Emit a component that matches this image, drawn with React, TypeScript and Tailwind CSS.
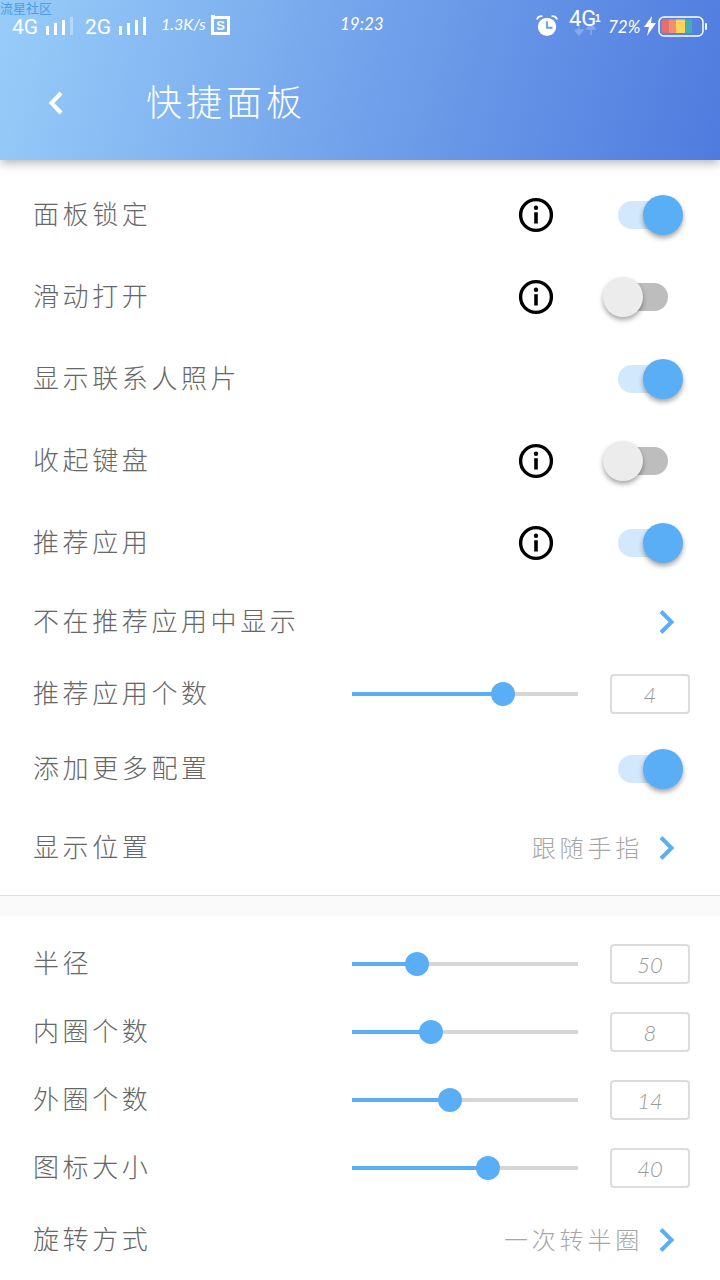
import React from "react";

const cjk = "font-['Noto_Sans_CJK_SC',sans-serif]";

function Info() {
  return (
    <svg width="36" height="36" viewBox="0 0 36 36" className="shrink-0">
      <circle cx="18" cy="18" r="15.4" fill="none" stroke="#000" strokeWidth="3.4" />
      <circle cx="18" cy="10.8" r="2.2" fill="#000" />
      <rect x="16.2" y="15.2" width="3.6" height="11.3" fill="#000" />
    </svg>
  );
}

function Chevron() {
  return (
    <svg width="18" height="26" viewBox="0 0 18 26" className="shrink-0">
      <path d="M3 2.5 L13.5 13 L3 23.5" fill="none" stroke="#5aaef5" strokeWidth="4" />
    </svg>
  );
}

function Switch({ on }: { on: boolean }) {
  return (
    <div className={on ? "relative h-[28px] w-[50px] rounded-full bg-[#d2e8fc]" : "relative h-[28px] w-[50px] rounded-full bg-[#bdbdbd]"}>
      <div
        className={
          on
            ? "absolute left-[25px] top-[-6px] h-[40px] w-[40px] rounded-full bg-[#5aaef5] shadow-[0_3px_5px_rgba(0,0,0,0.35)]"
            : "absolute left-[-15px] top-[-6px] h-[40px] w-[40px] rounded-full bg-[#ececec] shadow-[0_3px_5px_rgba(0,0,0,0.35)]"
        }
      />
    </div>
  );
}

function Label({ children }: { children: string }) {
  return <span className={`${cjk} mb-[4px] text-[26px] leading-none font-light tracking-[3.6px] text-[#666]`}>{children}</span>;
}

function SwitchRow({ label, info, on, h = "h-[82px]" }: { label: string; info?: boolean; on: boolean; h?: string }) {
  return (
    <div className={`flex items-center pl-[33px] ${h}`}>
      <Label>{label}</Label>
      <div className="ml-auto flex items-center">
        {info && <Info />}
        <div className="ml-[64px] mr-[52px] w-[50px] first:ml-0">
          <Switch on={on} />
        </div>
      </div>
    </div>
  );
}

function SliderRow({ label, value, pos }: { label: string; value: string; pos: number }) {
  return (
    <div className="flex h-[68px] items-center pl-[33px] pr-[30px]">
      <Label>{label}</Label>
      <div className="ml-auto mr-[32px] relative h-[4px] w-[226px] bg-[#d6d6d6]">
        <div className="h-full bg-[#5aaef5]" style={{ width: pos }} />
        <div className="absolute top-[-10px] h-[24px] w-[24px] rounded-full bg-[#5aaef5]" style={{ left: pos - 12 }} />
      </div>
      <div className="flex h-[40px] w-[80px] items-center justify-center rounded-[4px] border-2 border-[#dcdcdc] font-['Lato',sans-serif] text-[22px] font-light italic text-[#999]">
        {value}
      </div>
    </div>
  );
}

function LinkRow({ label, value }: { label: string; value?: string }) {
  return (
    <div className="flex h-[76px] items-center pl-[33px] pr-[44px]">
      <Label>{label}</Label>
      <div className="ml-auto flex items-center gap-[15px]">
        {value && <span className={`${cjk} mb-[3px] text-[24px] leading-none font-light tracking-[3.8px] text-[#a6a6a6]`}>{value}</span>}
        <Chevron />
      </div>
    </div>
  );
}

function Bars({ dim }: { dim?: boolean }) {
  return (
    <svg width="28" height="18" viewBox="0 0 28 18" className="shrink-0">
      <rect x="0" y="9" width="3" height="9" fill="#fff" />
      <rect x="8" y="6" width="3" height="12" fill="#fff" />
      <rect x="16" y="3" width="3" height="15" fill="#fff" />
      <rect x="24" y="0" width="3" height="18" fill="#fff" opacity={dim ? 0.35 : 1} />
    </svg>
  );
}

function StatusBar() {
  return (
    <div className="flex h-[52px] items-center font-['Liberation_Sans',sans-serif] text-white">
      <span className="ml-[12px] mt-[2px] w-[34px] text-[21px] leading-none font-['Roboto',sans-serif]">4G</span>
      <Bars dim />
      <span className="ml-[11px] mt-[2px] w-[34px] text-[21px] leading-none font-['Roboto',sans-serif]">2G</span>
      <Bars />
      <span className="ml-[14px] mb-[4px] w-[50px] text-[16px] italic leading-none font-['Lato',sans-serif]">1.3K/s</span>
      <svg width="20" height="20" viewBox="0 0 20 20" className="shrink-0 mb-[3px]">
        <rect x="1.5" y="2.5" width="16" height="16" fill="none" stroke="#fff" strokeWidth="3" />
        <rect x="0" y="0" width="4" height="3" fill="#fff" />
        <text x="9.5" y="15" fontSize="13" fontWeight="700" textAnchor="middle" fill="#fff" fontFamily="Liberation Sans">S</text>
      </svg>
      <span className="ml-[109px] mb-[5px] w-[44px] whitespace-nowrap text-[17px] italic leading-none font-['Lato',sans-serif]">19:23</span>
      <svg width="22" height="22" viewBox="0 0 24 24" className="ml-[152px] mb-[2px] shrink-0">
        <circle cx="12" cy="14" r="10" fill="#fff" />
        <path d="M1 6 C2 3 5 2 7 2.5 M23 6 C22 3 19 2 17 2.5" fill="none" stroke="#fff" strokeWidth="2" />
        <path d="M12 8 V15 H18" fill="none" stroke="#6b9ce8" strokeWidth="2" />
      </svg>
      <div className="relative ml-[11px] h-[36px] w-[34px]">
        <span className="absolute left-0 top-0 text-[22px] leading-none font-['Roboto',sans-serif]">4G</span>
        <span className="absolute left-[26px] top-[6px] text-[10px] font-bold leading-none">1</span>
        <svg width="24" height="12" viewBox="0 0 24 12" className="absolute left-[6px] top-[16px]">
          <path d="M4 0 V7 M0 6 L4 11 L8 6 Z M16 11 V4 M12 5 L16 0 L20 5 Z" fill="#fff" stroke="#fff" strokeWidth="1.5" opacity="0.25" />
        </svg>
      </div>
      <span className="ml-[5px] w-[36px] whitespace-nowrap text-[17px] italic leading-none font-['Lato',sans-serif]">72%</span>
      <svg width="12" height="20" viewBox="0 0 12 20" className="shrink-0">
        <path d="M8 0 L0 11 H5 L3 20 L12 7 H7 Z" fill="#fff" />
      </svg>
      <svg width="50" height="22" viewBox="0 0 50 22" className="ml-[2px] shrink-0">
        <rect x="1" y="2" width="44" height="19" rx="5" fill="none" stroke="#fff" strokeWidth="1.5" />
        <path d="M3.5 7 a2.5 2.5 0 0 1 2.5 -2.5 H11 V18 H6 a2.5 2.5 0 0 1 -2.5 -2.5 Z" fill="#e66f6b" />
        <rect x="11" y="4.5" width="7" height="13.5" fill="#f0906f" />
        <rect x="18" y="4.5" width="9" height="13.5" fill="#fdd55c" />
        <rect x="27" y="4.5" width="7" height="13.5" fill="#46aeb0" />
        <rect x="47" y="8" width="2" height="7" rx="1" fill="#fff" />
      </svg>
    </div>
  );
}

export default function App() {
  return (
    <div className="h-[1280px] w-[720px] overflow-hidden bg-white">
      <header className="relative z-10 h-[160px] bg-[linear-gradient(105deg,#98cdf9_0%,#76a6ec_45%,#4f7bdf_100%)] shadow-[0_3px_10px_rgba(0,0,0,0.3)]">
        <span className={`${cjk} absolute left-0 top-0 text-[13px] leading-[16px] text-[#4b9de9]`}>流星社区</span>
        <StatusBar />
        <div className="flex h-[102px] items-center pl-[46px]">
          <svg width="20" height="28" viewBox="0 0 20 28" className="shrink-0">
            <path d="M15 4 L5.5 14 L15 24" fill="none" stroke="#fff" strokeWidth="4" />
          </svg>
          <span className={`${cjk} ml-[80px] mb-[6px] text-[36px] leading-none font-light tracking-[4px] text-white`}>快捷面板</span>
        </div>
      </header>

      <section className="pt-[14px]">
        <SwitchRow label="面板锁定" info on />
        <SwitchRow label="滑动打开" info on={false} />
        <SwitchRow label="显示联系人照片" on />
        <SwitchRow label="收起键盘" info on={false} />
        <SwitchRow label="推荐应用" info on />
        <LinkRow label="不在推荐应用中显示" />
        <SliderRow label="推荐应用个数" value="4" pos={151} />
        <SwitchRow label="添加更多配置" on />
        <LinkRow label="显示位置" value="跟随手指" />
      </section>

      <div className="mt-[9px] h-[21px] border-t border-[#e0e0e0] bg-[#fafafa]" />

      <section className="pt-[14px]">
        <SliderRow label="半径" value="50" pos={65} />
        <SliderRow label="内圈个数" value="8" pos={79} />
        <SliderRow label="外圈个数" value="14" pos={98} />
        <SliderRow label="图标大小" value="40" pos={136} />
        <LinkRow label="旋转方式" value="一次转半圈" />
      </section>
    </div>
  );
}
